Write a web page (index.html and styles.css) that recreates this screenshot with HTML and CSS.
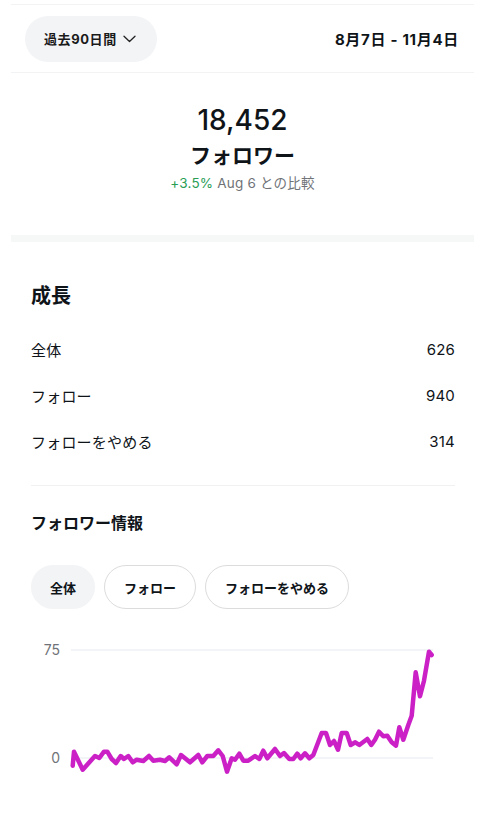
FILE: index.html
```html
<!DOCTYPE html>
<html lang="ja">
<head>
    <meta charset="UTF-8">
    <meta name="viewport" content="width=device-width, initial-scale=1.0">
    <title>フォロワー</title>
    <link rel="stylesheet" href="styles.css">
</head>
<body>
    <div class="page">
        <div class="header">
            <button class="range-btn">
                過去90日間
                <svg class="chevron" width="13" height="8" viewBox="0 0 13 8"><path d="M1 1.2 L6.5 6.5 L12 1.2" fill="none" stroke="#222" stroke-width="1.3" stroke-linecap="round" stroke-linejoin="round"/></svg>
            </button>
            <div class="dates">8月7日 - 11月4日</div>
        </div>

        <div class="summary">
            <div class="total">18,452</div>
            <div class="total-label">フォロワー</div>
            <div class="compare"><span class="up">+3.5%</span> Aug 6 との比較</div>
        </div>

        <div class="band"></div>

        <div class="section">
            <h2>成長</h2>
            <div class="row"><span>全体</span><span>626</span></div>
            <div class="row"><span>フォロー</span><span>940</span></div>
            <div class="row"><span>フォローをやめる</span><span>314</span></div>
            <div class="divider"></div>

            <h3>フォロワー情報</h3>
            <div class="chips">
                <span class="chip active">全体</span>
                <span class="chip">フォロー</span>
                <span class="chip">フォローをやめる</span>
            </div>
        </div>

        <!-- chart: viewBox uses page coordinates -->
        <svg class="chart" width="463" height="170" viewBox="11 630 463 170">
            <line x1="71" y1="651" x2="433" y2="651" stroke="#e7e9ee" stroke-width="1"/>
            <line x1="71" y1="759" x2="433" y2="759" stroke="#e7e9ee" stroke-width="1"/>
            <text x="60" y="656" class="axis">75</text>
            <text x="60" y="764" class="axis">0</text>
            <polyline fill="none" stroke="#cb20c6" stroke-width="4.5" stroke-linejoin="round" stroke-linecap="round"
                points="72.7,766.7 74,752.7 82.7,770.7 95,757 99.3,759 104,752.7 107.3,752.7 111.7,760 116,764 120.7,757 124,760 128.3,757 132.7,763.3 136.7,760.7 143.3,762 149,757 153.3,761.7 160,760.7 165,762 169.3,758.3 176.7,765.3 181,756 190,763.3 198.3,756 202.3,763.3 207.3,757 213.3,757 218.3,751.3 222.7,757 227,772.7 231.7,759.3 235,760.7 239.3,754.7 243.3,761.7 248.3,761.7 255,757 259.3,760 263.3,751.7 267.3,759.3 275,750 280,757 284,754 289.3,760 293.3,760 297.3,754.7 300.7,759.3 305,754.3 309.3,759.3 313.3,756 321.7,734 326,734 330,746 334,742 338,750.7 341.7,734 346.7,734 350.7,746 355.3,743.3 359.3,746 367.3,740 371.3,746 375,740.7 379,732.7 383.3,737.3 387.3,736.7 391.7,743.3 396,746.7 399.3,728.3 403.3,740.7 408.3,726 411.7,716.7 415.7,673.3 420,697.3 424,681.7 429,652.7 431.7,656"/>
        </svg>
    </div>
</body>
</html>
```

FILE: styles.css
```css
body {
    margin: 0;
    background-color: #fff;
    color: #0f1419;
    font-family: Inter, "Noto Sans CJK JP", sans-serif;
}
.page {
    width: 463px;
    padding: 0 7px 0 11px;
}
.header {
    margin-top: 4px;
    border-top: 1px solid #f2f3f4;
    border-bottom: 1px solid #f2f3f4;
    height: 67px;
    display: flex;
    align-items: center;
    justify-content: space-between;
    padding: 0 15px 0 14px;
}
.range-btn {
    height: 46px;
    width: 132px;
    border: none;
    border-radius: 23px;
    background-color: #f3f4f6;
    display: flex;
    align-items: center;
    gap: 6px;
    padding: 0 0 0 19px;
    font-family: inherit;
    font-size: 13px;
    font-weight: 700;
    letter-spacing: 0.6px;
    color: #1a1a1a;
}
.chevron {
    margin-top: 1px;
}
.dates {
    font-size: 15px;
    font-weight: 700;
    letter-spacing: 0.7px;
}
.summary {
    text-align: center;
    padding: 30px 0 43px;
}
.total {
    font-size: 28px;
    font-weight: 500;
    line-height: 34px;
}
.total-label {
    margin-top: 5px;
    font-size: 21px;
    font-weight: 700;
    line-height: 28px;
}
.compare {
    margin-top: 4px;
    font-size: 13.5px;
    line-height: 18px;
    letter-spacing: 0.2px;
    color: #6f7378;
}
.up {
    color: #2a9d55;
}
.band {
    height: 7px;
    background-color: #f6f7f7;
}
.section {
    padding: 0 19px 0 20px;
}
h2 {
    margin: 40px 0 16px;
    font-size: 20px;
    font-weight: 700;
    line-height: 28px;
}
.row {
    height: 46px;
    display: flex;
    align-items: center;
    justify-content: space-between;
    font-size: 15px;
    letter-spacing: 0.2px;
}
.divider {
    margin-top: 21px;
    height: 1px;
    background-color: #f0f1f2;
}
h3 {
    margin: 25px 0 30px;
    font-size: 16px;
    font-weight: 700;
    line-height: 24px;
}
.chips {
    display: flex;
    gap: 9px;
}
.chip {
    height: 42px;
    display: flex;
    align-items: center;
    padding: 0 19px;
    border: 1px solid #dcdcdc;
    border-radius: 22px;
    font-size: 13px;
    font-weight: 700;
}
.chip.active {
    padding: 0 18px;
    border-color: #f3f4f6;
    background-color: #f3f4f6;
}
.chart {
    display: block;
    margin-top: 20px;
}
.axis {
    font-size: 14px;
    fill: #6f7378;
    text-anchor: end;
}
```
